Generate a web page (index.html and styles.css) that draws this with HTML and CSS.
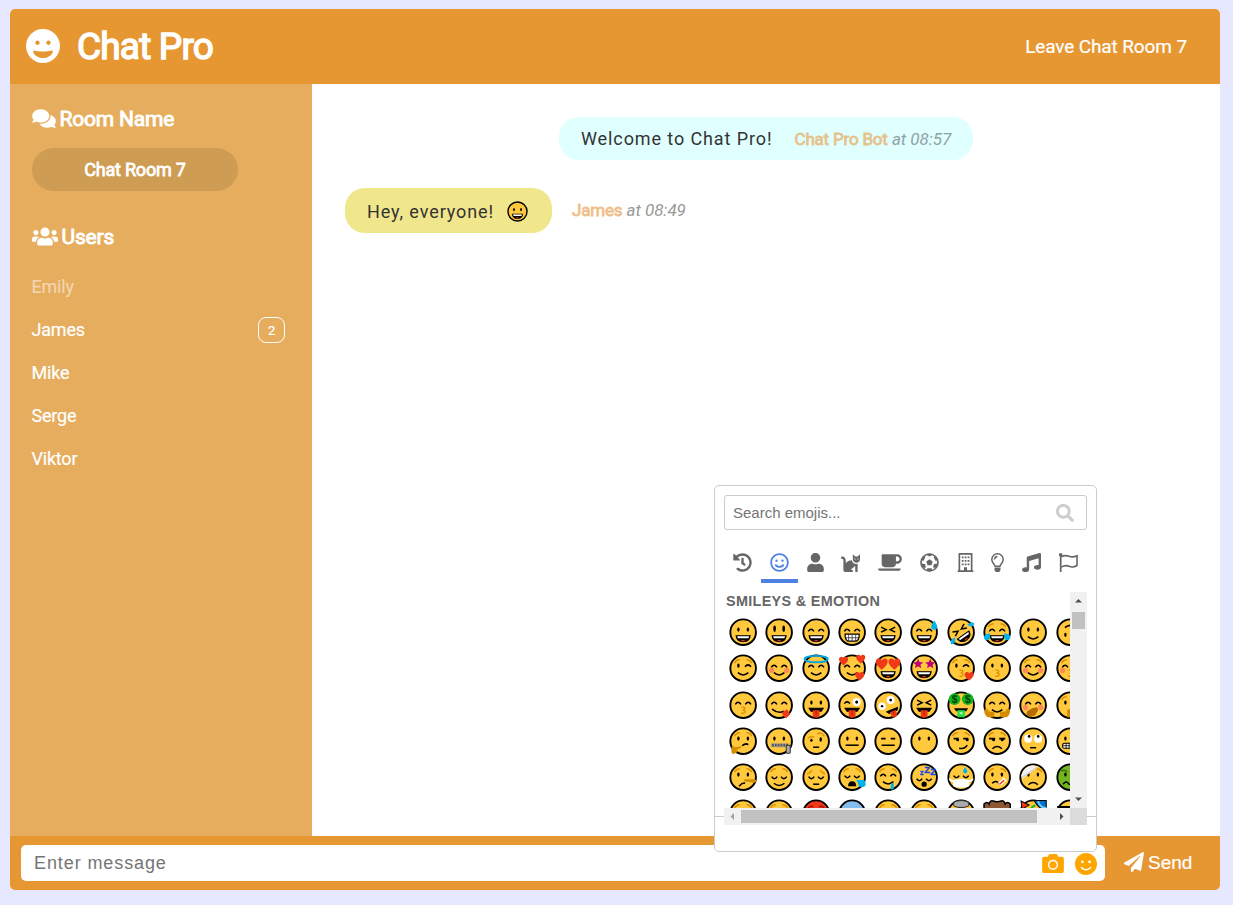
FILE: index.html
```html
<!DOCTYPE html>
<html lang="en">
<head>
<meta charset="utf-8">
<title>Chat Pro</title>
<link rel="stylesheet" href="styles.css">
</head>
<body>
<svg class="defs" aria-hidden="true">
<defs>
<circle id="f" r="12.7" fill="#ffc83d" stroke="#000" stroke-width="1.9"/>
<g id="eo"><ellipse cx="-4.7" cy="-2.6" rx="1.2" ry="2.1"/><ellipse cx="4.7" cy="-2.6" rx="1.2" ry="2.1"/></g>
<g id="et"><ellipse cx="-4.5" cy="-3.4" rx="1.3" ry="3.1"/><ellipse cx="4.5" cy="-3.4" rx="1.3" ry="3.1"/></g>
<path id="ea" d="M-7.8-.8q2.8-4 5.6 0M2.2-.8q2.8-4 5.6 0" class="ln"/>
<path id="ed" d="M-7.5-1.5q2.8 4 5.6 0M1.9-1.5q2.8 4 5.6 0" class="ln"/>
<path id="ex" d="M-7-5l5 2.5-5 2.5M7-5l-5 2.5 5 2.5" class="ln"/>
<g id="ew"><ellipse cx="-4.7" cy="-2.4" rx="1.2" ry="2.1"/><path d="M1.8-1.5q3-3.5 6 0" class="ln"/></g>
<path id="br" d="M-8.5-5q1.5-3.3 5.2-3.3M8.5-5q-1.5-3.3-5.2-3.3" class="brow"/>
<g id="mg"><path d="M-7 3.5H7Q6.2 9.5 0 9.5T-7 3.5z" stroke="#000"/><path d="M-6 4H6L5.2 6H-5.2z" fill="#fff"/><path d="M-2.6 9q2.6-2.4 5.2 0z" fill="#f03a17"/></g>
<path id="ms" d="M-5.2 4.5q5.2 4.5 10.4 0" class="ln"/>
<path id="mf" d="M-4.7 7.5q4.7-4.3 9.4 0" class="ln"/>
<path id="mk" d="M-1.8 2q4-.4 3.3 1.7-.5 1.2-2 1.1 3 .2 2.3 2.2-.5 1.3-3.6 1" class="brow"/>
<g id="mt"><path d="M-7 3H7L5 6H-5z" stroke="#000"/><path d="M-3.4 5H3.4V9.5q0 3-3.4 3t-3.4-3z" fill="#f03a17"/><path d="M0 5v5" stroke="#b5200a"/></g>
<g id="bl" fill="#ff8a5c"><circle cx="-7.5" cy="2.3" r="2.6"/><circle cx="7.5" cy="2.3" r="2.6"/></g>
<path id="h" d="M0 4.3C-7-.8-4.4-4.6-2-4.2-.6-4 0-2.7 0-2.7S.6-4 2-4.2C4.400-4.600 7-.8 0 4.300z" fill="#f03a17"/>
<path id="st" d="M0-4.800L1.400-1.500 5-1.200 2.300 1.100 3.100 4.600 0 2.700-3.100 4.600-2.300 1.100-5-1.200-1.400-1.500z" fill="#bf0077"/>
<path id="dr" d="M0-4.500Q3 0 3 1.700A3 3 0 0 1-3 1.700Q-3 0 0-4.500z" fill="#00b4f0"/>
</defs>
</svg>

<div class="app">
  <header class="header">
    <svg class="logo" viewBox="0 8 496 496"><path d="M248 8C111 8 0 119 0 256s111 248 248 248 248-111 248-248S385 8 248 8zm80 168c17.700 0 32 14.300 32 32s-14.300 32-32 32-32-14.300-32-32 14.300-32 32-32zm-160 0c17.700 0 32 14.300 32 32s-14.300 32-32 32-32-14.300-32-32 14.300-32 32-32zm80 256c-60.600 0-134.500-38.300-143.800-93.300-2-11.800 9.300-21.600 20.700-17.900C155.100 330.500 200 336 248 336s92.900-5.500 123.100-15.200c11.500-3.700 22.600 6.200 20.700 17.900-9.300 55-83.200 93.300-143.800 93.300z"/></svg>
    <h1 class="title">Chat Pro</h1>
    <a class="leave">Leave Chat Room 7</a>
  </header>

  <div class="main">
    <aside class="sidebar">
      <h3 class="side-title"><svg class="ic-comments" viewBox="0 0 576 512"><path d="M416 192c0-88.400-93.100-160-208-160S0 103.600 0 192c0 34.300 14.100 65.900 38 92-13.400 30.200-35.500 54.200-35.800 54.500-2.200 2.300-2.800 5.700-1.500 8.700S4.800 352 8 352c36.600 0 66.900-12.300 88.700-25 32.200 15.700 70.300 25 111.300 25 114.900 0 208-71.600 208-160zm122 220c23.900-26 38-57.700 38-92 0-66.900-53.500-124.200-129.300-148.100.9 6.600 1.300 13.300 1.300 20.100 0 105.900-107.700 192-240 192-10.800 0-21.300-.8-31.700-1.900C207.800 439.600 281.800 480 368 480c41 0 79.100-9.200 111.300-25 21.800 12.700 52.100 25 88.700 25 3.200 0 6.100-1.900 7.300-4.800 1.300-2.900.7-6.300-1.500-8.700-.3-.3-22.400-24.200-35.800-54.500z"/></svg><span>Room Name</span></h3>
      <div class="room">Chat Room 7</div>
      <h3 class="side-title users-title"><svg class="ic-users" viewBox="0 0 640 512"><path d="M96 224c35.300 0 64-28.700 64-64s-28.700-64-64-64-64 28.700-64 64 28.700 64 64 64zm448 0c35.300 0 64-28.700 64-64s-28.700-64-64-64-64 28.700-64 64 28.700 64 64 64zm32 32h-64c-17.600 0-33.500 7.100-45.100 18.600 40.300 22.100 68.900 62 75.100 109.400h66c17.700 0 32-14.300 32-32v-32c0-35.300-28.700-64-64-64zm-256 0c61.900 0 112-50.100 112-112S381.900 32 320 32 208 82.100 208 144s50.100 112 112 112zm76.800 32h-8.300c-20.800 10-43.900 16-68.500 16s-47.600-6-68.500-16h-8.300C179.600 288 128 339.600 128 403.200V432c0 26.500 21.500 48 48 48h288c26.500 0 48-21.500 48-48v-28.800c0-63.600-51.600-115.200-115.200-115.200zm-223.700-13.400C161.500 263.100 145.600 256 128 256H64c-35.300 0-64 28.700-64 64v32c0 17.700 14.300 32 32 32h65.900c6.300-47.400 34.900-87.300 75.200-109.400z"/></svg><span>Users</span></h3>
      <ul class="users">
        <li class="me">Emily</li>
        <li>James<span class="badge">2</span></li>
        <li>Mike</li>
        <li>Serge</li>
        <li>Viktor</li>
      </ul>
    </aside>
    <section class="messages">
      <div class="row row-bot">
        <div class="bubble bot"><span class="text">Welcome to Chat Pro!</span><span class="meta"><b>Chat Pro Bot</b> <i>at 08:57</i></span></div>
      </div>
      <div class="row">
        <div class="bubble user"><span class="text">Hey, everyone!</span><svg class="inline-emoji" viewBox="-14 -14 28 28"><use href="#f"/><use href="#eo"/><use href="#mg"/></svg></div>
        <span class="meta outside"><b>James</b> <i>at 08:49</i></span>
      </div>
    </section>
  </div>

  <footer class="footer">
    <div class="input"><span class="placeholder">Enter message</span>
      <svg class="ic-camera" viewBox="0 32 512 448"><path d="M512 144v288c0 26.500-21.500 48-48 48H48c-26.500 0-48-21.500-48-48V144c0-26.500 21.500-48 48-48h88l12.300-32.900c7-18.700 24.900-31.100 44.900-31.100h125.500c20 0 37.900 12.400 44.900 31.100L376 96h88c26.500 0 48 21.500 48 48zM376 288c0-66.200-53.800-120-120-120s-120 53.800-120 120 53.800 120 120 120 120-53.800 120-120zm-32 0c0 48.500-39.500 88-88 88s-88-39.500-88-88 39.500-88 88-88 88 39.500 88 88z"/></svg>
      <svg class="ic-smile" viewBox="0 8 496 496"><path d="M248 8C111 8 0 119 0 256s111 248 248 248 248-111 248-248S385 8 248 8zm80 168c17.700 0 32 14.300 32 32s-14.300 32-32 32-32-14.300-32-32 14.300-32 32-32zm-160 0c17.700 0 32 14.300 32 32s-14.300 32-32 32-32-14.300-32-32 14.300-32 32-32zm194.800 170.200C334.300 380.400 292.500 400 248 400s-86.300-19.600-114.800-53.800c-13.600-16.300 11-36.700 24.600-20.500 22.400 26.900 55.200 42.200 90.200 42.200s67.800-15.400 90.200-42.200c13.400-16.200 38.100 4.200 24.600 20.500z"/></svg>
    </div>
    <div class="send"><svg class="ic-plane" viewBox="0 0 512 512"><path d="M476 3.200L12.500 270.600c-18.100 10.400-15.800 35.600 2.200 43.200L121 358.400l287.300-253.200c5.500-4.900 13.300 2.600 8.600 8.300L176 407v80.500c0 23.600 28.500 32.900 42.500 15.800L282 426l124.600 52.200c14.200 6 30.400-2.900 33-18.200l72-432C515 7.800 493.300-6.800 476 3.200z"/></svg><span>Send</span></div>
  </footer>
</div>

<div class="picker">
  <div class="search"><span>Search emojis...</span><svg viewBox="0 0 512 512"><path d="M505 442.700L405.300 343c-4.500-4.500-10.600-7-17-7H372c27.600-35.300 44-79.700 44-128C416 93.100 322.900 0 208 0S0 93.100 0 208s93.100 208 208 208c48.300 0 92.700-16.400 128-44v16.300c0 6.400 2.500 12.500 7 17l99.700 99.700c9.400 9.400 24.600 9.400 33.900 0l28.300-28.300c9.400-9.400 9.400-24.600.1-34zM208 336c-70.700 0-128-57.200-128-128 0-70.700 57.200-128 128-128 70.700 0 128 57.200 128 128 0 70.700-57.200 128-128 128z"/></svg></div>
  <div class="tabs">
    <span class="tab"><svg viewBox="0 0 512 512"><path d="M504 255.531c.253 136.640-111.180 248.372-247.820 248.468-59.015.042-113.223-20.530-155.822-54.911-11.077-8.940-11.905-25.541-1.839-35.607l11.267-11.267c8.609-8.609 22.353-9.551 31.891-1.984C173.062 425.135 212.781 440 256 440c101.705 0 184-82.311 184-184 0-101.705-82.311-184-184-184-48.814 0-93.149 18.969-126.068 49.932l50.754 50.754c10.080 10.080 2.941 27.314-11.313 27.314H24c-8.837 0-16-7.163-16-16V38.627c0-14.254 17.234-21.393 27.314-11.314l49.372 49.372C129.209 34.136 189.552 8 256 8c136.810 0 247.747 110.780 248 247.531zm-180.912 78.784l9.823-12.630c8.138-10.463 6.253-25.542-4.210-33.679L288 256.349V152c0-13.255-10.745-24-24-24h-16c-13.255 0-24 10.745-24 24v135.651l65.409 50.874c10.463 8.137 25.541 6.253 33.679-4.210z"/></svg></span>
    <span class="tab active"><svg viewBox="-8 0 512 512"><path d="M248 8C111 8 0 119 0 256s111 248 248 248 248-111 248-248S385 8 248 8zm0 448c-110.300 0-200-89.700-200-200S137.700 56 248 56s200 89.700 200 200-89.700 200-200 200zm-80-216c17.700 0 32-14.300 32-32s-14.300-32-32-32-32 14.300-32 32 14.300 32 32 32zm160 0c17.700 0 32-14.300 32-32s-14.300-32-32-32-32 14.300-32 32 14.300 32 32 32zm4 72.600c-20.800 25-51.500 39.400-84 39.400s-63.200-14.300-84-39.400c-8.500-10.200-23.700-11.500-33.800-3.100-10.200 8.500-11.500 23.600-3.100 33.800 30 36 74.100 56.600 120.900 56.600s90.900-20.600 120.900-56.600c8.500-10.200 7.100-25.300-3.100-33.800-10.100-8.400-25.300-7.100-33.800 3.100z"/></svg></span>
    <span class="tab tab-user"><svg viewBox="-32 0 512 512"><path d="M224 256c70.700 0 128-57.300 128-128S294.700 0 224 0 96 57.300 96 128s57.300 128 128 128zm89.600 32h-16.700c-22.200 10.200-46.900 16-72.900 16s-50.600-5.800-72.900-16h-16.700C60.200 288 0 348.200 0 422.400V464c0 26.500 21.500 48 48 48h352c26.500 0 48-21.500 48-48v-41.600c0-74.200-60.200-134.400-134.400-134.400z"/></svg></span>
    <span class="tab"><svg viewBox="0 0 512 512"><path d="M290.590 192c-20.180 0-106.820 1.980-162.590 85.950V192c0-52.940-43.060-96-96-96-17.670 0-32 14.330-32 32s14.330 32 32 32c17.640 0 32 14.360 32 32v256c0 35.300 28.700 64 64 64h176c8.840 0 16-7.160 16-16v-16c0-17.670-14.330-32-32-32h-32l128-96v144c0 8.840 7.160 16 16 16h32c8.840 0 16-7.160 16-16V289.860c-10.290 2.670-20.890 4.540-32 4.540-61.810 0-113.520-44.050-125.410-102.400zM448 96h-64l-64-64v134.400c0 53.020 42.980 96 96 96s96-42.980 96-96V32l-64 64zm-72 80c-8.840 0-16-7.160-16-16s7.160-16 16-16 16 7.160 16 16-7.160 16-16 16zm80 0c-8.840 0-16-7.160-16-16s7.160-16 16-16 16 7.160 16 16-7.160 16-16 16z"/></svg></span>
    <span class="tab tab-food"><svg class="wide" viewBox="0 0 640 512"><path d="M192 384h192c53 0 96-43 96-96h32c70.600 0 128-57.400 128-128S582.600 32 512 32H120c-13.300 0-24 10.700-24 24v232c0 53 43 96 96 96zM512 96c35.300 0 64 28.700 64 64s-28.700 64-64 64h-32V96h32zm47.700 384H48.300c-47.600 0-61-64-36-64h583.300c25 0 11.800 64-35.900 64z"/></svg></span>
    <span class="tab"><svg viewBox="0 0 19 19"><circle cx="9.500" cy="9.500" r="8.500" fill="none" stroke="currentColor" stroke-width="1.700"/><path d="M9.500 6.200l3.200 2.300-1.200 3.800h-4l-1.200-3.800zM6 1.700l3.500 1.700 3.500-1.700-1-1H7zM1 7l2.700.8 1.700-4.100-1.600-.5zM18 7l-2.700.8-1.700-4.100 1.600-.5zM1 10.500l2.600 4.500 2.300-.4-.8-3.700zM18 10.500l-2.600 4.500-2.300-.4.8-3.700zM7.300 15.200h4.400l.6 2.500-2.800.8-2.800-.8z"/></svg></span>
    <span class="tab tab-place"><svg viewBox="0 0 19 19"><path fill-rule="evenodd" d="M2.500.8q0-.8.8-.8h12.400q.8 0 .8.800V17.300h.8V19H1.700v-1.700h.8zM4.200 1.700V17.300H8v-3h3v3h3.800V1.700z"/><path d="M5.800 3.500h1.800v1.800H5.800zM8.700 3.500h1.800v1.800H8.700zM11.600 3.500h1.800v1.800h-1.800zM5.800 7h1.800v1.800H5.800zM8.700 7h1.800v1.800H8.700zM11.600 7h1.800v1.800h-1.800zM5.800 10.500h1.800v1.800H5.800zM8.700 10.500h1.800v1.800H8.700zM11.600 10.500h1.800v1.800h-1.800z"/></svg></span>
    <span class="tab tab-object"><svg viewBox="0 0 19 19"><path d="M7 13.200C6.500 11 3.800 9.800 3.800 6.500a5.700 5.700 0 0 1 11.400 0c0 3.300-2.700 4.500-3.200 6.700zM6.400 6.500q.3-2.800 3.100-3" fill="none" stroke="currentColor" stroke-width="1.500"/><path d="M6.500 14.500h6v2.400L11.300 19H7.700l-1.200-2.100z"/></svg></span>
    <span class="tab"><svg viewBox="0 0 512 512"><path d="M511.990 32.010c0-21.710-21.100-37.010-41.600-30.510L150.400 96c-13.300 4.200-22.400 16.500-22.400 30.500v261.420c-10.050-2.380-20.720-3.920-32-3.920-53.020 0-96 28.650-96 64s42.980 64 96 64 96-28.650 96-64V214.310l256-75.020v184.630c-10.050-2.380-20.720-3.920-32-3.920-53.020 0-96 28.650-96 64s42.980 64 96 64 96-28.650 96-64l-.01-351.990z"/></svg></span>
    <span class="tab"><svg viewBox="0 0 19 19"><circle cx="1.700" cy="1.800" r="1.800"/><path d="M1.700 1.500V19" stroke="currentColor" stroke-width="1.700"/><path d="M2.300 3.800Q6 1.800 10 3.300T18 2.700V12.500Q14 15 10 13.300T2.300 14.200" fill="none" stroke="currentColor" stroke-width="1.600"/></svg></span>
  </div>
  <div class="scroller">
    <div class="viewport">
      <h4 class="group">SMILEYS &amp; EMOTION</h4>
      <div class="emojis">
        <svg viewBox="-18 -18 36 36"><use href="#f"/><use href="#eo"/><use href="#mg"/></svg>
        <svg viewBox="-18 -18 36 36"><use href="#f"/><use href="#et"/><use href="#mg"/></svg>
        <svg viewBox="-18 -18 36 36"><use href="#f"/><use href="#ea"/><use href="#mg"/></svg>
        <svg viewBox="-18 -18 36 36"><use href="#f"/><use href="#ea"/><path d="M-7 2H7Q7 9 3 9H-3Q-7 9-7 2z" fill="#fff" stroke="#000" stroke-width="1.200"/><path d="M-6.500 5.600h13M-3.500 2.500V9M0 2.500V9M3.500 2.500V9" stroke="#333" stroke-width=".8"/></svg>
        <svg viewBox="-18 -18 36 36"><use href="#f"/><use href="#ex"/><use href="#mg"/></svg>
        <svg viewBox="-18 -18 36 36"><use href="#f"/><use href="#ea"/><use href="#mg"/><use href="#dr" x="10" y="-7"/></svg>
        <svg viewBox="-18 -18 36 36"><use href="#f"/><g transform="rotate(-35)"><use href="#ex"/><use href="#mg"/></g><path d="M6-7q6-5 7-1-1 4-7 1zM-6 5q-6 3-4 7 5 0 4-7z" fill="#00b4f0"/></svg>
        <svg viewBox="-18 -18 36 36"><use href="#f"/><use href="#br"/><use href="#ea"/><use href="#mg"/><path d="M-7 1q-7 1-6 5 3 4 6 0zM7 1q7 1 6 5-3 4-6 0z" fill="#00b4f0"/></svg>
        <svg viewBox="-18 -18 36 36"><use href="#f"/><use href="#eo"/><use href="#ms"/></svg>
        <svg viewBox="-18 -18 36 36"><use href="#f"/><g transform="rotate(180)"><use href="#eo"/><use href="#ms"/></g></svg>

        <svg viewBox="-18 -18 36 36"><use href="#f"/><use href="#br"/><use href="#ew"/><use href="#ms"/></svg>
        <svg viewBox="-18 -18 36 36"><use href="#f"/><use href="#bl"/><use href="#ea"/><use href="#ms"/></svg>
        <svg viewBox="-18 -18 36 36"><use href="#f"/><use href="#ea"/><use href="#ms"/><ellipse cy="-9" rx="11.500" ry="3.200" fill="none" stroke="#00a5dc" stroke-width="1.900"/></svg>
        <svg viewBox="-18 -18 36 36"><use href="#f"/><use href="#ea"/><use href="#ms"/><use href="#h" x="-8.500" y="-7"/><use href="#h" x="8.500" y="-9"/><use href="#h" x="7.500" y="8"/></svg>
        <svg viewBox="-18 -18 36 36"><use href="#f"/><use href="#mg"/><use href="#h" transform="translate(-6.300 -4) scale(1.300)"/><use href="#h" transform="translate(6.300 -4) scale(1.300)"/></svg>
        <svg viewBox="-18 -18 36 36"><use href="#f"/><use href="#mg"/><use href="#st" x="-6" y="-4.500"/><use href="#st" x="6" y="-4.500"/></svg>
        <svg viewBox="-18 -18 36 36"><use href="#f"/><use href="#br"/><use href="#ew"/><use href="#mk"/><use href="#h" x="8" y="8"/></svg>
        <svg viewBox="-18 -18 36 36"><use href="#f"/><use href="#eo"/><use href="#mk"/></svg>
        <svg viewBox="-18 -18 36 36"><use href="#f"/><use href="#br"/><use href="#bl"/><use href="#ea"/><use href="#ms"/></svg>
        <svg viewBox="-18 -18 36 36"><use href="#f"/><use href="#br"/><use href="#bl"/><use href="#ea"/><use href="#mk"/></svg>

        <svg viewBox="-18 -18 36 36"><use href="#f"/><use href="#ea"/><use href="#mk"/></svg>
        <svg viewBox="-18 -18 36 36"><use href="#f"/><use href="#ea"/><path d="M-7 4q6 5 12 2" class="ln"/><path d="M3 7l5-3 3 5-4 4q-4-2-4-6z" fill="#f03a17"/></svg>
        <svg viewBox="-18 -18 36 36"><use href="#f"/><use href="#eo"/><use href="#mt"/></svg>
        <svg viewBox="-18 -18 36 36"><use href="#f"/><path d="M-7.800-1.500q2.800-3.500 5.600 0" class="ln"/><circle cx="4.500" cy="-3" r="4" fill="#fff"/><circle cx="4.500" cy="-3" r="1.500"/><use href="#mt"/></svg>
        <svg viewBox="-18 -18 36 36"><use href="#f"/><circle cx="-6" cy="1" r="3.700" fill="#fff"/><circle cx="-6" cy="1" r="1.200"/><circle cx="2.500" cy="-5" r="4" fill="#fff"/><circle cx="2.500" cy="-5" r="1.400"/><g transform="translate(3 2) rotate(-22) scale(.85)"><use href="#mt"/></g></svg>
        <svg viewBox="-18 -18 36 36"><use href="#f"/><use href="#ex"/><use href="#mt"/></svg>
        <svg viewBox="-18 -18 36 36"><use href="#f"/><circle cx="-6.500" cy="-6" r="5.800" fill="#13b51d"/><circle cx="6.500" cy="-6" r="5.800" fill="#13b51d"/><text x="-6.500" y="-2.500" class="dollar">$</text><text x="6.500" y="-2.500" class="dollar">$</text><path d="M-7 3H7L5 6H-5z"/><path d="M-3.700 5h7.400v7h-7.400z" fill="#21df45"/><path d="M-1.500 7h3v2h-3z" fill="#b9f5c0"/></svg>
        <svg viewBox="-18 -18 36 36"><use href="#f"/><use href="#ea"/><use href="#ms"/><path d="M-12.500 4q4-1 4 2l6 1-1 5h-6q-4-3-3-8zM12.500 4q-4-1-4 2l-6 1 1 5h6q4-3 3-8z" fill="#d58c00"/></svg>
        <svg viewBox="-18 -18 36 36"><use href="#f"/><use href="#bl"/><use href="#ea"/><path d="M-6 6l5-3 5-1 1 3-3 5-5 2q-5-2-3-6z" fill="#b56d00"/></svg>
        <svg viewBox="-18 -18 36 36"><use href="#f"/><use href="#br"/><use href="#eo"/><path d="M-3 5q3-3 6 0v7h-6z" fill="#d58c00"/></svg>

        <svg viewBox="-18 -18 36 36"><use href="#f"/><use href="#br"/><use href="#eo"/><path d="M-1 4.500q4-3 6-1" class="ln"/><path d="M-11 4l3 2 6-1q1 2-4 3v3l-4 2q-3-2-1-9z" fill="#d58c00"/></svg>
        <svg viewBox="-18 -18 36 36"><use href="#f"/><use href="#eo"/><path d="M-8 4H9" stroke="#555" stroke-width="3"/><path d="M-8 4H8" stroke="#aaa" stroke-width="5" stroke-dasharray="1 1.800"/><rect x="7" y="4" width="4" height="8" rx="1" fill="#aaa" stroke="#333"/></svg>
        <svg viewBox="-18 -18 36 36"><use href="#f"/><path d="M-8-3q3-2 6-1M1-7q4-3 7 2" class="brow"/><ellipse cx="-4.700" cy="-.8" rx="1.200" ry="1.500"/><ellipse cx="4.500" cy="-1.700" rx="1.200" ry="2.200"/><path d="M-3 6h6" class="ln"/></svg>
        <svg viewBox="-18 -18 36 36"><use href="#f"/><use href="#eo"/><path d="M-6.500 4H6.500" class="ln"/></svg>
        <svg viewBox="-18 -18 36 36"><use href="#f"/><path d="M-7-2.500h4.500M2.500-2.500H7M-6.500 4H6.500" class="ln"/></svg>
        <svg viewBox="-18 -18 36 36"><use href="#f"/><use href="#eo"/></svg>
        <svg viewBox="-18 -18 36 36"><use href="#f"/><use href="#br"/><path d="M-7.500-2.500h5M2-2.500h5M-2 7q6 1 8-3" class="ln"/><circle cx="-3.500" cy="-1.500" r="1.500"/><circle cx="6" cy="-1.500" r="1.500"/></svg>
        <svg viewBox="-18 -18 36 36"><use href="#f"/><use href="#br"/><path d="M-8-2.500h6M2-2.500h6" class="ln"/><circle cx="-3.500" cy="-1.500" r="1.500"/><circle cx="5" cy="-1.500" r="1.500"/><use href="#mf"/></svg>
        <svg viewBox="-18 -18 36 36"><use href="#f"/><circle cx="-5" cy="-2.500" r="4" fill="#fff"/><circle cx="5" cy="-2.500" r="4" fill="#fff"/><circle cx="-4" cy="-4.700" r="1.300"/><circle cx="5" cy="-4.700" r="1.300"/><path d="M-3 6.500h6" class="ln"/></svg>
        <svg viewBox="-18 -18 36 36"><use href="#f"/><use href="#eo"/><rect x="-7.500" y="2" width="15" height="5" rx="2" fill="#fff" stroke="#000"/><path d="M-7 4.500H7M-4 2v5M-1 2v5M2 2v5" stroke="#000" stroke-width=".8"/></svg>

        <svg viewBox="-18 -18 36 36"><use href="#f"/><use href="#br"/><use href="#eo"/><path d="M1 2h10.500l2.500 2-3 1.500L1 4z" fill="#d58c00"/><path d="M-4 9q3-4 6-3" class="ln"/></svg>
        <svg viewBox="-18 -18 36 36"><use href="#f"/><use href="#br"/><use href="#ed" y="1"/><use href="#ms" y="1.500"/></svg>
        <svg viewBox="-18 -18 36 36"><use href="#f"/><path d="M-9-3q3-1 5-4M9-3q-3-1-5-4" class="brow"/><use href="#ed" y="1"/><path d="M-3 7h6" class="ln"/></svg>
        <svg viewBox="-18 -18 36 36"><use href="#f"/><use href="#br"/><use href="#ed"/><path d="M-4 9q0-5 4-5t4 5z"/><path d="M4 2.500l8 .5q3 4 0 6.500-6 1-6-3z" fill="#00b4f0"/></svg>
        <svg viewBox="-18 -18 36 36"><use href="#f"/><use href="#br"/><use href="#ea"/><use href="#ms"/><path d="M3 6h2.500v5q-1.500 3-3 0z" fill="#00b4f0"/></svg>
        <svg viewBox="-18 -18 36 36"><use href="#f"/><use href="#ed" y="3"/><circle cy="7" r="2.600"/><text x="-4" y="-2" class="zed z1">z</text><text x="0" y="-4" class="zed z2">Z</text><text x="6" y="-2" class="zed z2">Z</text></svg>
        <svg viewBox="-18 -18 36 36"><use href="#f"/><use href="#ed"/><path d="M-12 1l4 2q8-3 16 0l4-2v2l-4 2v4q-8 3-16 0V5l-4-2z" fill="#fff"/><use href="#dr" transform="translate(4 -7) scale(.7)"/></svg>
        <svg viewBox="-18 -18 36 36"><use href="#f"/><use href="#br"/><use href="#eo"/><path d="M-5 6q4-4 8 1" class="ln"/><path d="M2 7l6-5" stroke="#fff" stroke-width="4"/><path d="M2.500 7L7 3" stroke="#f03a17" stroke-width="1.500"/></svg>
        <svg viewBox="-18 -18 36 36"><use href="#f"/><use href="#br"/><use href="#eo"/><use href="#mf"/><path d="M-11.800-2Q-9-11 0-11.800L5-10-11 1.500z" fill="#f2f2f2"/><path d="M-11 0L4-10" stroke="#c9c9c9"/></svg>
        <svg viewBox="-18 -18 36 36"><circle r="12.700" fill="#72b51f" stroke="#000" stroke-width="1.900"/><use href="#eo"/><path d="M-9-6q4-2 6 1" stroke="#397311" fill="none" stroke-width="1.500"/><path d="M-7 7q3-4 5-1t6-1" class="ln"/></svg>

        <svg viewBox="-18 -18 36 36"><use href="#f"/><use href="#br"/></svg>
        <svg viewBox="-18 -18 36 36"><use href="#f"/><use href="#br"/></svg>
        <svg viewBox="-18 -18 36 36"><circle r="12.700" fill="#f03a17" stroke="#000" stroke-width="1.900"/><path d="M-8-5q3-3 5-1M8-5q-3-3-5-1" stroke="#a80d0d" fill="none" stroke-width="1.500"/></svg>
        <svg viewBox="-18 -18 36 36"><circle r="12.700" fill="#83bdec" stroke="#000" stroke-width="1.900"/></svg>
        <svg viewBox="-18 -18 36 36"><use href="#f"/><use href="#br"/></svg>
        <svg viewBox="-18 -18 36 36"><use href="#f"/><use href="#br"/></svg>
        <svg viewBox="-18 -18 36 36"><use href="#f"/><path d="M-7-7q-2-4 3-5 4-1 8 0 5 1 3 5-7 3-14 0z" fill="#aaa" stroke="#333"/></svg>
        <svg viewBox="-18 -18 36 36"><path d="M-13-3v-6q3-3 5 0 1-4 4-3 4 1.500 8 0 3-1 4 3 2-3 5 0v6z" fill="#8b5735" stroke="#000" stroke-width="1.500"/></svg>
        <svg viewBox="-18 -18 36 36"><use href="#f"/><path d="M-12-12l8 4-7 4z" fill="#f03a17" stroke="#000"/><path d="M1-12.500h12v10q-8-2-12-10z" fill="#006fc9" stroke="#000"/><path d="M5-12q1 6 8 7" fill="none" stroke="#6ecbff" stroke-width="2"/><path d="M-2-5l4-3" stroke="#13b51d" stroke-width="2"/></svg>
        <svg viewBox="-18 -18 36 36"><use href="#f"/><path d="M-13-7H13v5H-12z"/></svg>
      </div>
    </div>
    <div class="vbar"><svg viewBox="0 0 17 17"><path d="M5 10.500h7L8.500 7z"/></svg><i class="vthumb"></i><svg class="end" viewBox="0 0 17 17"><path d="M5 6.500h7L8.500 10z"/></svg></div>
    <div class="hbar"><svg class="off" viewBox="0 0 17 17"><path d="M10 5v7L6.500 8.500z"/></svg><i class="hthumb"></i><svg class="end" viewBox="0 0 17 17"><path d="M7 5v7l3.500-3.500z"/></svg></div>
    <div class="corner"></div>
  </div>
</div>
</body>
</html>
```
FILE: styles.css
```css
* { box-sizing: border-box; }
body {
  margin: 0;
  padding: 9px 13px 15px 10px;
  height: 905px;
  background: #e6e8ff;
  font-family: Roboto, sans-serif;
  font-size: 18px;
  overflow: hidden;
}
h1, h3, h4, ul { margin: 0; padding: 0; }
svg { display: block; flex: none; fill: currentColor; }
.defs { position: absolute; width: 0; height: 0; }
.ln { fill: none; stroke: #000; stroke-width: 1.5; }
.brow { fill: none; stroke: #dc9200; stroke-width: 1.4; }
.dollar { font: bold 10px "Liberation Sans", sans-serif; text-anchor: middle; fill: #003c00; }
.zed { font: bold 9px "Liberation Sans", sans-serif; fill: #1548e0; stroke: #1548e0; stroke-width: .4px; }
.z1 { font-size: 7px; }
.z2 { font-size: 9.5px; }

.app {
  height: 881px;
  display: flex;
  flex-direction: column;
  border-radius: 5px;
  overflow: hidden;
  background: #fff;
}
.header {
  height: 75px;
  flex: none;
  display: flex;
  align-items: center;
  padding: 0 33px 0 16px;
  background: #e69732;
  color: #fff;
}
.logo { width: 34px; height: 34px; margin-bottom: 2px; }
.title {
  margin-left: 17px;
  font-size: 37px;
  font-weight: 400;
  letter-spacing: -.8px;
  -webkit-text-stroke: 1.4px;
}
.leave { margin-left: auto; font-size: 19px; letter-spacing: -.12px; -webkit-text-stroke: .2px; }

.main { flex: 1; display: flex; min-height: 0; }
.sidebar {
  width: 302px;
  padding: 22px 27px 0 21.500px;
  background: #e5ad5d;
  color: #fff;
}
.side-title {
  height: 26px;
  display: flex;
  align-items: center;
  gap: 4px;
  font-size: 21px;
  font-weight: 400;
  letter-spacing: -.2px;
  -webkit-text-stroke: .9px;
}
.side-title svg { stroke: none; margin-bottom: 1px; }
.ic-comments { width: 24px; height: 21px; }
.ic-users { width: 26px; height: 21px; }
.room {
  width: 206px;
  height: 43px;
  margin: 16px 0 33px .5px;
  border-radius: 22px;
  background: #ce9c53;
  line-height: 43px;
  text-align: center;
  letter-spacing: -.2px;
  -webkit-text-stroke: .8px;
}
.users { margin-top: 15px; list-style: none; letter-spacing: -.2px; -webkit-text-stroke: .2px; }
.users li {
  height: 43px;
  display: flex;
  align-items: center;
  justify-content: space-between;
}
.users .me { color: #f3d6ae; }
.badge {
  width: 27px;
  height: 26px;
  border: 1px solid #fff;
  border-radius: 8px;
  font-size: 13px;
  line-height: 25px;
  text-align: center;
}

.messages { flex: 1; padding: 33px 0 0 33px; }
.row { display: flex; align-items: center; gap: 20px; }
.row-bot { padding-left: 214px; margin-bottom: 28px; }
.bubble { display: flex; align-items: center; border-radius: 20px; padding: 0 22px; }
.bot { width: 414px; height: 43px; background: #e0ffff; gap: 22px; }
.user { width: 207px; height: 45px; background: #f0e68c; gap: 13px; }
.text { color: #333; letter-spacing: .9px; white-space: nowrap; }
.user .text { padding-top: 2px; }
.inline-emoji { width: 21px; height: 21px; margin-top: 2px; }
.meta { font-size: 17px; color: #999; white-space: nowrap; }
.meta b { font-weight: 400; letter-spacing: -.2px; color: #efc08a; -webkit-text-stroke: .8px; }
.meta i { letter-spacing: -.05px; }
.meta.outside { margin-bottom: 2px; }
.bot .meta { color: #8fa3a3; }
.bot .meta b { color: #e4c38c; }

.footer {
  height: 54px;
  flex: none;
  display: flex;
  align-items: center;
  padding-left: 11px;
  background: #e69732;
}
.input {
  width: 1084px;
  height: 36px;
  display: flex;
  align-items: center;
  padding: 0 8px 0 13px;
  border-radius: 5px;
  background: #fff;
  color: #ffa500;
}
.placeholder {
  margin-right: auto;
  color: #757575;
  font-family: "Liberation Sans", Arial, sans-serif;
  letter-spacing: .9px;
}
.ic-camera { width: 22px; height: 19px; margin: 1px 11px 0 0; }
.ic-smile { width: 22px; height: 22px; margin-top: 2px; }
.send { display: flex; align-items: center; gap: 4px; margin-left: 19px; color: #fff; font-size: 19px; }
.send span { font-family: "Liberation Sans", Arial, sans-serif; -webkit-text-stroke: .2px; }
.ic-plane { width: 20px; height: 20px; margin-bottom: 2px; }

.picker {
  position: absolute;
  left: 714px;
  top: 485px;
  width: 383px;
  height: 367px;
  padding: 9px;
  border: 1px solid #ccc;
  border-radius: 5px;
  background: linear-gradient(#ccc, #ccc) 0 330px / 100% 1px no-repeat #fff;
  color: #666;
  font-family: "Liberation Sans", Arial, sans-serif;
}
.search {
  height: 35px;
  display: flex;
  align-items: center;
  justify-content: space-between;
  padding: 0 12px 0 8px;
  border: 1px solid #ccc;
  border-radius: 3px;
  color: #757575;
  font-size: 15px;
}
.search svg { width: 18px; height: 18px; color: #ccc; }
.tabs { display: flex; height: 36px; margin-top: 17px; }
.tab {
  width: 37px;
  height: 36px;
  display: flex;
  justify-content: center;
  padding-top: 6px;
}
.tab svg { width: 19px; height: 19px; }
.tab svg.wide { width: 24px; }
.tab-user { width: 34px; }
.tab-food { width: 42px; }
.tab-place { width: 34px; }
.tab-object { width: 31px; }
.active { color: #4f81e5; border-bottom: 4px solid #4f81e5; }
.scroller {
  display: grid;
  grid-template: 216px 17px / 346px 17px;
  margin-top: 9px;
  color: #505050;
}
.viewport { overflow: hidden; }
.group {
  height: 22px;
  padding-left: 2px;
  color: #666;
  font-size: 14.4px;
  letter-spacing: .32px;
  line-height: 18px;
}
.emojis {
  display: grid;
  grid-template-columns: repeat(10, 36.3px);
  grid-auto-rows: 36.3px;
  padding-left: 1px;
  color: #000;
}
.emojis svg { width: 36.3px; height: 36.3px; }
.inline-emoji { color: #000; }
.vbar { display: flex; flex-direction: column; align-items: center; background: #f1f1f1; }
.hbar { display: flex; align-items: center; background: #f1f1f1; }
.vbar svg, .hbar svg { width: 17px; height: 17px; }
.vthumb { width: 13px; height: 17px; margin-top: 3px; background: #c1c1c1; }
.vbar .end { margin-top: auto; }
.hthumb { width: 296px; height: 13px; background: #c1c1c1; }
.hbar .end { margin-left: auto; }
.off { color: #a3a3a3; }
.corner { background: #dcdcdc; }
```
